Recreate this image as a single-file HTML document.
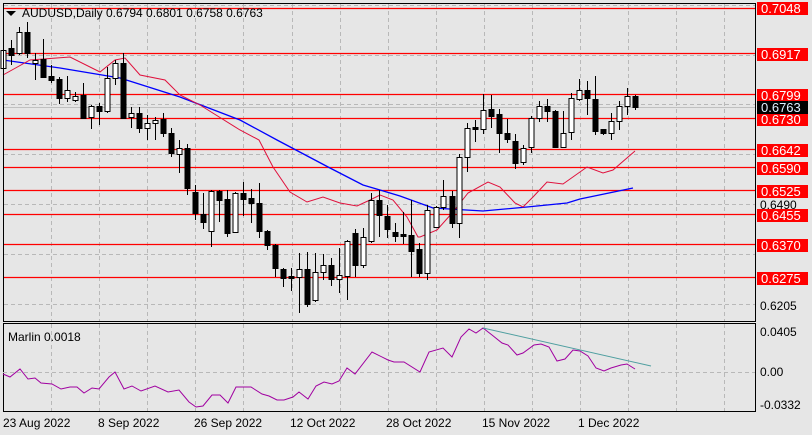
<!DOCTYPE html>
<html><head><meta charset="utf-8"><style>
html,body{margin:0;padding:0;background:#e6e6e6;width:812px;height:435px;overflow:hidden}
svg{display:block;font-family:"Liberation Sans",sans-serif}
</style></head><body>
<svg id="s" width="812" height="435" xmlns="http://www.w3.org/2000/svg">
<rect x="0" y="0" width="812" height="435" fill="#e6e6e6"/>
<g id="grid" stroke="#b8b8b8" stroke-dasharray="4,3" stroke-width="1"></g>
<g stroke="#ff0000" stroke-width="1.2">
<line x1="3" x2="755" y1="8.5" y2="8.5"/><line x1="3" x2="755" y1="53.5" y2="53.5"/>
<line x1="3" x2="755" y1="94.5" y2="94.5"/><line x1="3" x2="755" y1="118.5" y2="118.5"/>
<line x1="3" x2="755" y1="149.5" y2="149.5"/><line x1="3" x2="755" y1="167.5" y2="167.5"/>
<line x1="3" x2="755" y1="190.5" y2="190.5"/><line x1="3" x2="755" y1="214.5" y2="214.5"/>
<line x1="3" x2="755" y1="244.5" y2="244.5"/><line x1="3" x2="755" y1="277.5" y2="277.5"/>
</g>
<line x1="3" x2="755" y1="107.5" y2="107.5" stroke="#c0c0c0"/>
<polyline fill="none" stroke="#0000ff" stroke-width="1.3" points="3,60 60,68 120,78 180,97 240,120 277,140 330,168 363,185 380,190 400,196 433,208 483,211 527,207 567,203 580,199 633,188"/>
<polyline fill="none" stroke="#e0103c" stroke-width="1" points="3,75 30,60 70,57 100,72 115,60 125,58 140,75 165,80 180,95 200,105 240,130 259,140 273,167 290,192 307,202 323,197 340,203 357,206 370,200 380,195 393,200 407,217 418,237 420,237 437,230 453,212 468,193 488,182 500,187 515,203 523,207 533,197 547,182 563,184 587,167 603,173 613,170 635,151"/>
<g id="c"></g>
<rect x="3.5" y="3.5" width="752" height="318" fill="none" stroke="#000"/>
<rect x="3.5" y="323.5" width="752" height="88" fill="none" stroke="#000"/>
<line x1="3" x2="755" y1="372.5" y2="372.5" stroke="#b8b8b8" stroke-dasharray="4,3"/>
<polyline fill="none" stroke="#a000a0" stroke-width="1" points="3,374 10,377 20,369 28,379 35,378 41,383 52,384 61,389 70,387 77,387 84,393 92,388 99,389 109,377 115,372 124,389 132,386 141,391 155,386 168,392 179,390 189,402 196,407 203,406 212,395 220,395 228,403 236,387 251,387 262,394 269,396 277,400 284,400 293,397 299,392 308,399 316,386 324,382 332,384 339,381 347,368 355,374 372,352 388,360 394,362 404,362 420,372 429,352 443,348 452,357 461,337 469,329 476,333 483,328 492,335 502,343 508,345 517,355 523,353 534,345 541,344 549,347 557,361 565,359 573,350 580,351 588,356 596,368 604,371 611,368 621,365 627,364 635,369"/>
<line x1="483" y1="328" x2="651" y2="366" stroke="#4f9fa0" stroke-width="1"/>
<text x="8" y="341" font-size="12" fill="#000">Marlin 0.0018</text>
<path d="M6 11 L16 11 L11 16 Z" fill="#000"/>
<text x="22" y="17" font-size="12" fill="#000">AUDUSD,Daily  0.6794 0.6801 0.6758 0.6763</text>
<g font-size="12" fill="#000">
<text x="760" y="209">0.6490</text><text x="760" y="310">0.6205</text>
<text x="760" y="336">0.0405</text><text x="760" y="376">0.00</text><text x="760" y="409">-0.0332</text>
</g>
<g id="lab" font-size="13"></g>
<g font-size="12" fill="#000">
<text x="3" y="427">23 Aug 2022</text><text x="98" y="427">8 Sep 2022</text><text x="194" y="427">26 Sep 2022</text>
<text x="290" y="427">12 Oct 2022</text><text x="386" y="427">28 Oct 2022</text><text x="482" y="427">15 Nov 2022</text>
<text x="578" y="427">1 Dec 2022</text>
</g>
</svg>
<script>
var N="http://www.w3.org/2000/svg";
function el(p,t,a,txt){var e=document.createElementNS(N,t);for(var k in a)e.setAttribute(k,a[k]);if(txt)e.textContent=txt;p.appendChild(e);return e;}
var g=document.getElementById('grid');
for(var x=51;x<755;x+=48.1){var xx=Math.round(x)+.5;el(g,'line',{x1:xx,x2:xx,y1:4,y2:321});el(g,'line',{x1:xx,x2:xx,y1:324,y2:411});}
[5,55,104,154,204,254,304].forEach(function(y){el(g,'line',{x1:4,x2:755,y1:y+.5,y2:y+.5});});
var C=[[3,50,68,44,72,1],[11,48,55,40,65,0],[19,32,53,27,55,1],[27,32,53,22,58,0],[35,60,63,53,80,1],[43,59,77,39,78,0],[51,76,80,65,83,0],[59,79,98,77,104,0],[67,90,98,76,102,1],[75,96,100,92,102,1],[83,95,118,83,118,0],[91,106,117,105,129,1],[99,106,111,103,125,0],[107,78,111,67,113,1],[115,63,78,60,85,1],[123,63,118,53,118,0],[131,113,117,107,128,1],[139,113,128,107,133,0],[147,123,128,115,140,1],[155,120,123,117,140,1],[163,119,133,113,137,0],[171,133,153,128,157,0],[179,148,154,140,173,1],[187,148,188,144,195,0],[195,192,213,185,220,0],[203,214,222,193,229,0],[211,191,231,190,247,1],[219,191,200,190,222,0],[227,199,233,190,237,0],[235,193,232,192,233,1],[243,193,199,182,216,0],[251,198,203,189,223,0],[259,203,231,183,238,0],[267,231,245,230,250,0],[275,245,268,244,277,0],[283,269,278,268,287,0],[291,276,278,268,291,0],[299,269,277,253,313,1],[307,269,304,252,307,0],[315,272,300,253,302,1],[323,265,272,254,280,1],[331,265,279,258,286,0],[339,275,279,248,293,1],[347,241,276,240,300,1],[355,233,265,229,277,0],[363,237,265,228,268,1],[371,200,241,193,243,1],[379,200,215,190,237,0],[387,216,229,205,238,0],[395,232,236,223,242,0],[403,234,236,212,244,0],[411,235,251,200,277,0],[419,249,273,243,277,0],[427,210,273,205,280,1],[436,207,227,206,228,1],[443,196,207,180,210,1],[452,196,223,191,228,0],[459,157,223,154,238,1],[467,128,157,123,172,1],[475,127,129,120,142,0],[483,110,129,94,134,1],[491,109,116,95,128,0],[499,114,133,109,153,0],[507,133,139,119,143,0],[515,141,163,134,169,0],[523,148,162,145,165,1],[531,118,147,116,153,1],[539,106,118,101,122,1],[547,106,111,99,122,0],[555,111,147,110,148,0],[563,133,147,111,148,1],[571,98,132,93,140,1],[579,90,99,79,101,1],[587,90,98,81,115,0],[595,99,131,76,135,0],[603,129,133,129,135,0],[611,121,133,113,140,1],[619,106,121,101,130,1],[627,96,106,88,115,1],[635,96,107,95,110,0]];
var c=document.getElementById('c');
C.forEach(function(d){var x=d[0]+.5;el(c,'line',{x1:x,x2:x,y1:d[3],y2:d[4],stroke:'#000'});var h=Math.max(1,d[2]-d[1]);
el(c,'rect',{x:d[0]-2,y:d[1]+.5,width:5,height:h,fill:d[5]?'#fff':'#000',stroke:'#000','stroke-width':1});});
var L=[['0.7048',8],['0.6917',54],['0.6799',95],['0.6730',119],['0.6642',150],['0.6590',168],['0.6525',191],['0.6455',215],['0.6370',245],['0.6275',278]];
var lab=document.getElementById('lab');
L.forEach(function(l){el(lab,'rect',{x:757,y:l[1]-6,width:51,height:13,fill:'#ff0000'});el(lab,'text',{x:761,y:l[1]+5,fill:'#fff'},l[0]);});
el(lab,'rect',{x:757,y:101,width:51,height:13,fill:'#000'});el(lab,'text',{x:761,y:112,fill:'#e0f0ff'},'0.6763');
</script>
</body></html>
